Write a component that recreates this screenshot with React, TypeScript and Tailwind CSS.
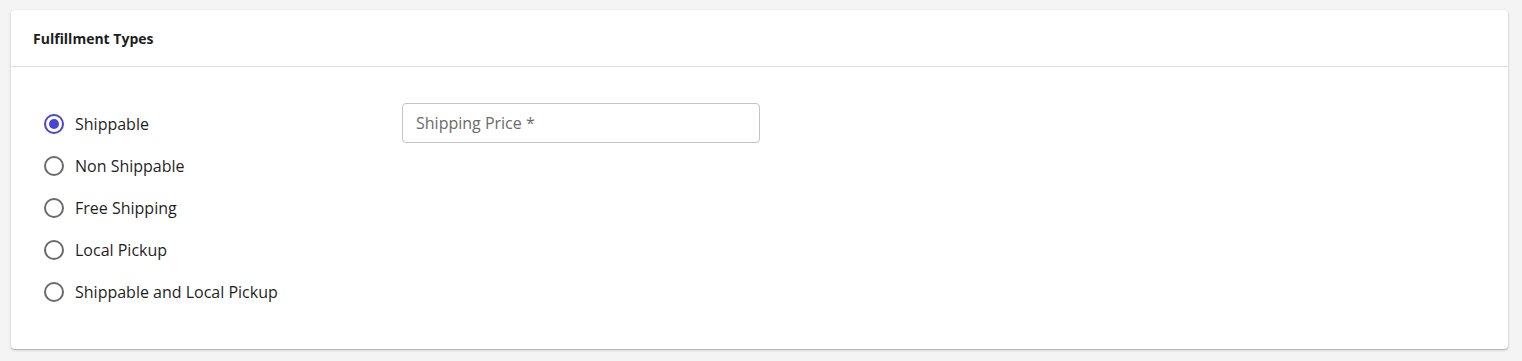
import { useState } from "react"

const options = [
  "Shippable",
  "Non Shippable",
  "Free Shipping",
  "Local Pickup",
  "Shippable and Local Pickup",
]

function RadioDot({ checked }: { checked: boolean }) {
  return (
    <span
      className={`flex h-5 w-5 shrink-0 items-center justify-center rounded-full border-2 ${
        checked ? "border-[#4b44d6]" : "border-[#6b6b6b]"
      }`}
    >
      {checked && <span className="h-[10px] w-[10px] rounded-full bg-[#4b44d6]" />}
    </span>
  )
}

export default function App() {
  const [selected, setSelected] = useState("Shippable")

  return (
    <div
      className="min-h-[361px] bg-[#f4f4f4] pt-[10px] pb-3 pl-[11px] pr-[14px]"
      style={{ fontFamily: '"Open Sans", "Liberation Sans", sans-serif' }}
    >
      <div className="rounded bg-white shadow-[0_1px_3px_rgba(0,0,0,0.2),0_1px_1px_rgba(0,0,0,0.14)]">
        {/* Header */}
        <div className="flex h-[57px] items-center border-b border-[#e2e2e2] px-[22px]">
          <h2 className="text-[14px] font-bold text-[#1d1d1d]">Fulfillment Types</h2>
        </div>

        {/* Body */}
        <div className="flex px-[33px] py-9">
          <div className="flex w-[358px] flex-col">
            {options.map((opt) => (
              <label
                key={opt}
                className="flex h-[42px] cursor-pointer items-center gap-[11px]"
                onClick={() => setSelected(opt)}
              >
                <RadioDot checked={selected === opt} />
                <span className="text-base text-[#1f1f1f]">{opt}</span>
              </label>
            ))}
          </div>

          <div>
            {selected === "Shippable" && (
              <input
                type="text"
                placeholder="Shipping Price *"
                className="h-10 w-[358px] rounded border border-[#c4c4c4] px-[13px] text-base text-[#1f1f1f] outline-none placeholder:text-[#6b6b6b]"
              />
            )}
          </div>
        </div>
      </div>
    </div>
  )
}
